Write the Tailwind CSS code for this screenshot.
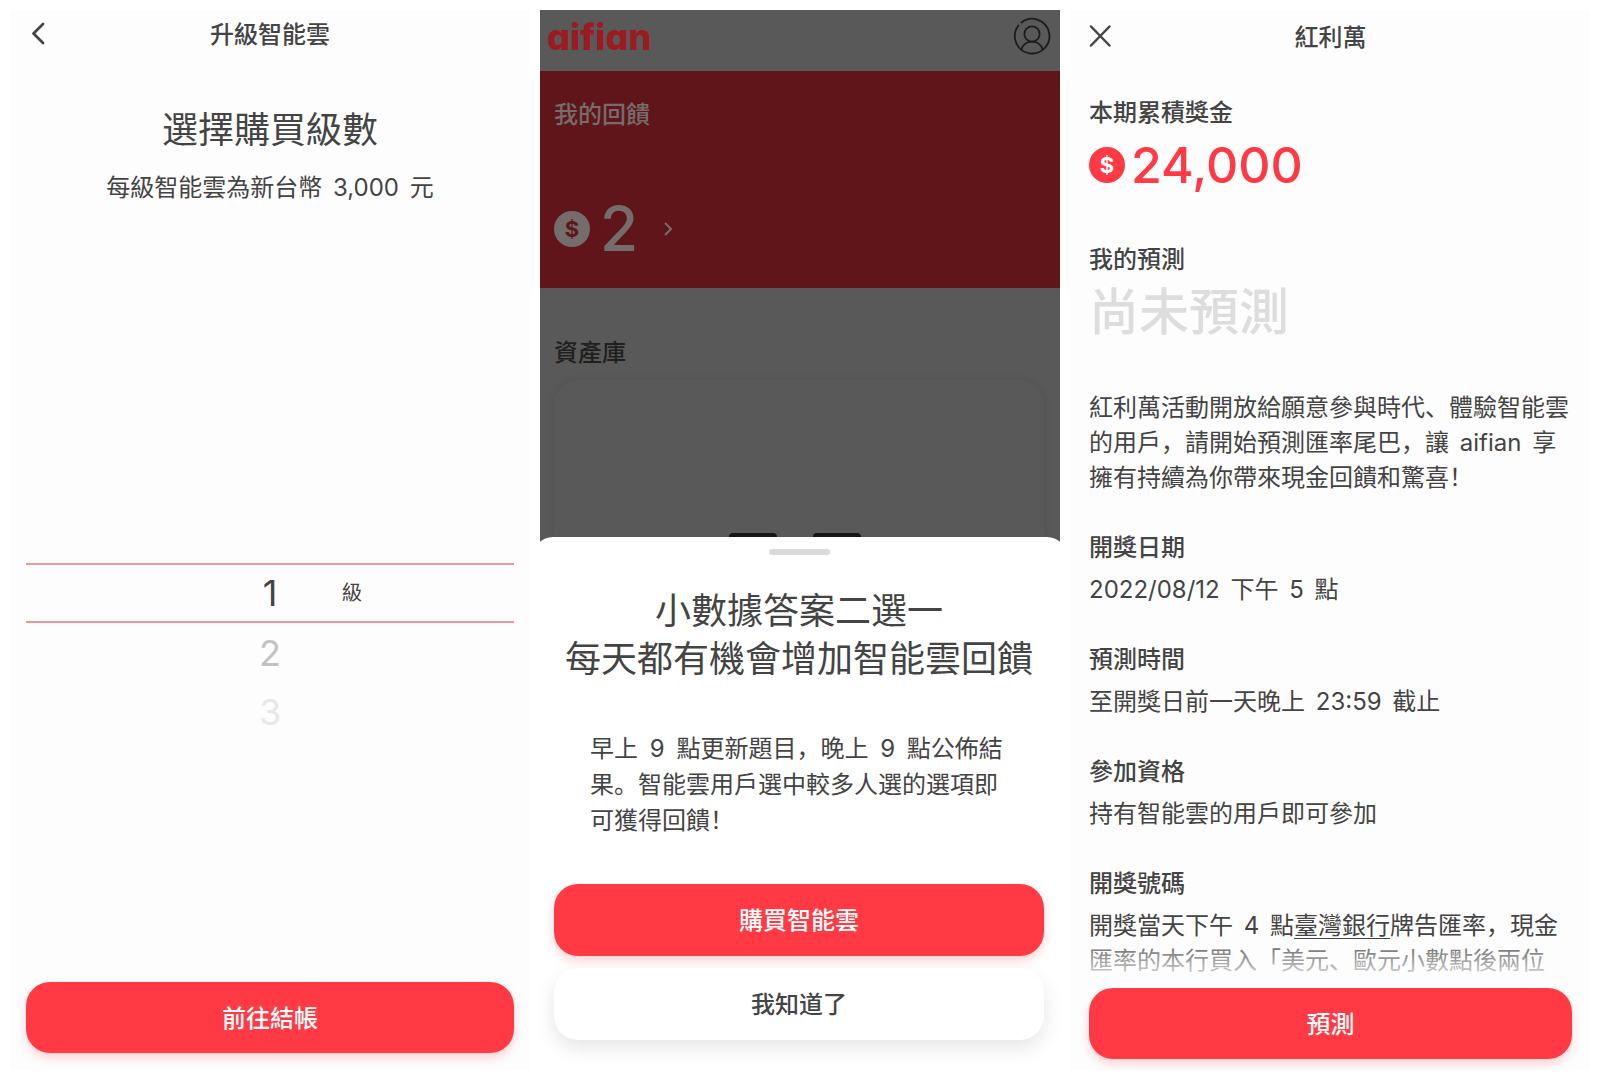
<!DOCTYPE html>
<html lang="zh">

<head>
    <meta charset="UTF-8">
    <meta name="viewport" content="width=device-width, initial-scale=1.0">
    <title>aifian 智能雲</title>
    <script src="https://cdn.jsdelivr.net/npm/@tailwindcss/browser@4"></script>
</head>

<body class="bg-white font-['Inter','Noto_Sans_CJK_SC',sans-serif] text-2xl text-[#444]">
    <div class="grid grid-cols-3 gap-2.5 p-2.5 h-screen">

        <!-- Upgrade: pick a level -->
        <section class="flex flex-col bg-[#fdfdfd] px-4 pb-[17px]">
            <header class="grid grid-cols-[40px_1fr_40px] items-center h-[50px]">
                <button type="button" aria-label="返回" class="pl-1 pb-1">
                    <svg class="w-6 h-6" viewBox="0 0 24 24" fill="none" stroke="#444" stroke-width="2.8" stroke-linecap="round" stroke-linejoin="round">
                        <path d="M13 3 3.500 12.500 13 22" />
                    </svg>
                </button>
                <h1 class="text-center font-medium">升級智能雲</h1>
            </header>

            <div class="mt-11 text-center">
                <h2 class="text-4xl leading-[52px]">選擇購買級數</h2>
                <p class="mt-3.5 leading-9">每級智能雲為新台幣 <span class="mx-1">3,000</span> 元</p>
            </div>

            <div class="flex-1 flex flex-col justify-center pb-1">
                <ul class="text-center text-4xl">
                    <li class="h-[60px]"></li>
                    <li class="h-[60px]"></li>
                    <li class="grid grid-cols-[1fr_144px_1fr] items-center h-[60px] border-y-2 border-[#e79a9d]">
                        <span class="col-start-2">1</span>
                        <span class="text-xl text-left">級</span>
                    </li>
                    <li class="h-[59px] leading-[60px] text-[#c2c2c2]">2</li>
                    <li class="h-[59px] leading-[60px] text-[#e8e8e8]">3</li>
                </ul>
            </div>

            <button type="button" class="h-[71px] pt-0.5 rounded-3xl bg-[#ff3a44] text-white font-medium shadow-[0_5px_10px_rgba(255,58,68,0.22)]">前往結帳</button>
        </section>

        <!-- Home dimmed behind the bottom sheet -->
        <section class="flex flex-col bg-[#595959] overflow-hidden">
            <header class="flex items-center justify-between h-[61px] pl-[7px] pr-2 pb-2">
                <span class="text-4xl font-extrabold text-[#9c1a22] [font-feature-settings:'cv11']">aifian</span>
                <button type="button" aria-label="個人資料">
                    <svg class="w-10 h-10" viewBox="0 0 40 40" fill="none" stroke="#1c1c1c" stroke-width="1.800" stroke-linecap="round">
                        <path d="M9.500 5.500A17.300 17.300 0 1 1 6.500 8.500" />
                        <circle cx="20" cy="17" r="7.600" />
                        <path d="M9.400 32.500C11 27.500 15 24.600 20 24.600S29 27.500 30.600 32.500" />
                    </svg>
                </button>
            </header>

            <div class="h-[217px] bg-[#5f1519] text-[#756c6c] px-3.5 pt-[26px]">
                <p class="leading-9 font-medium">我的回饋</p>
                <a href="#" class="flex items-center mt-[58px]">
                    <svg class="w-9 h-9" viewBox="0 0 36 36">
                        <circle cx="18" cy="18" r="18" fill="currentColor" />
                        <text x="18" y="26" text-anchor="middle" font-size="22" font-weight="700" fill="#5f1519">$</text>
                    </svg>
                    <span class="ml-2.5 text-[62px] leading-[76px] font-medium">2</span>
                    <svg class="w-3 h-4 ml-6" viewBox="0 0 12 16" fill="none" stroke="currentColor" stroke-width="2">
                        <path d="M3 2l6 6-6 6" />
                    </svg>
                </a>
            </div>

            <div class="h-[249px] pl-3.5 pr-4 pt-[47px] flex flex-col">
                <h2 class="leading-9 font-medium text-[#1f1f1f]">資產庫</h2>
                <div class="flex-1 flex items-end justify-center gap-9 mt-[9px] rounded-t-3xl bg-[#595959] shadow-[0_0_8px_rgba(0,0,0,0.08)]">
                    <span class="w-12 h-1 rounded-t-sm bg-[#151515]"></span>
                    <span class="w-12 h-1 rounded-t-sm bg-[#151515] mr-2"></span>
                </div>
            </div>

            <div class="flex-1 flex flex-col -mx-[7px] pl-[21px] pr-[23px] pb-[30px] bg-white rounded-t-[20px]">
                <div class="mx-auto mt-3 w-[61px] h-1.5 rounded-full bg-[#dcdcdc]"></div>
                <h2 class="mt-8 text-center text-4xl leading-[48px]">小數據答案二選一<br>每天都有機會增加智能雲回饋</h2>
                <p class="mt-12 pl-9 pr-8 leading-9">早上 <span class="mx-[5px]">9</span> 點更新題目，晚上 <span class="mx-[5px]">9</span> 點公佈結果。智能雲用戶選中較多人選的選項即可獲得回饋！</p>
                <button type="button" class="mt-auto h-[72px] pt-0.5 shrink-0 rounded-3xl bg-[#ff3a44] text-white font-medium shadow-[0_5px_10px_rgba(255,58,68,0.22)]">購買智能雲</button>
                <button type="button" class="mt-3 h-[72px] pt-0.5 shrink-0 rounded-3xl bg-white font-medium shadow-[0_8px_20px_rgba(0,0,0,0.1)]">我知道了</button>
            </div>
        </section>

        <!-- Bonus draw details -->
        <section class="relative flex flex-col bg-[#fdfdfd] pl-[19px] pr-[18px] pb-[11px] overflow-hidden">
            <header class="grid grid-cols-[40px_1fr_40px] items-center h-14 shrink-0">
                <button type="button" aria-label="關閉" class="pb-1">
                    <svg class="w-6 h-6" viewBox="0 0 24 24" fill="none" stroke="#444" stroke-width="2.500" stroke-linecap="round">
                        <path d="M2 2.500l18.500 19M20.500 2.500 2 21.500" />
                    </svg>
                </button>
                <h1 class="text-center font-medium">紅利萬</h1>
            </header>

            <div class="flex-1 min-h-0 overflow-hidden pt-[29px] leading-[35px]">
                <h2 class="font-medium leading-9">本期累積獎金</h2>
                <p class="flex items-center gap-1.5 text-[#ff3a44] text-[50px] leading-[68px] font-medium">
                    <svg class="w-9 h-9" viewBox="0 0 36 36">
                        <circle cx="18" cy="18" r="18" fill="currentColor" />
                        <text x="18" y="26" text-anchor="middle" font-size="22" font-weight="700" fill="#fff">$</text>
                    </svg>
                    24,000
                </p>
                <h2 class="mt-[43px] font-medium leading-9">我的預測</h2>
                <p class="text-[50px] leading-[68px] font-medium text-[#ddd]">尚未預測</p>

                <div class="mt-11 flex flex-col gap-[35px]">
                    <p>紅利萬活動開放給願意參與時代、體驗智能雲的用戶，請開始預測匯率尾巴，讓 <span class="mx-1">aifian</span> 享擁有持續為你帶來現金回饋和驚喜！</p>
                    <div>
                        <h3 class="mb-1.5 font-medium leading-9">開獎日期</h3>
                        <p>2022/08/12 <span class="ml-1">下午</span> <span class="mx-1">5</span> 點</p>
                    </div>
                    <div>
                        <h3 class="mb-1.5 font-medium leading-9">預測時間</h3>
                        <p>至開獎日前一天晚上 <span class="mx-1">23:59</span> 截止</p>
                    </div>
                    <div>
                        <h3 class="mb-1.5 font-medium leading-9">參加資格</h3>
                        <p>持有智能雲的用戶即可參加</p>
                    </div>
                    <div>
                        <h3 class="mb-1.5 font-medium leading-9">開獎號碼</h3>
                        <p>開獎當天下午 <span class="mx-1">4</span> 點<a href="#" class="underline underline-offset-4 decoration-1">臺灣銀行</a>牌告匯率，現金匯率的本行買入「美元、歐元小數點後兩位</p>
                    </div>
                </div>
            </div>

            <div class="relative">
                <div class="absolute bottom-full inset-x-0 h-11 bg-linear-to-b from-[#fdfdfd]/20 to-[#fdfdfd]"></div>
                <button type="button" class="block w-full h-[71px] pt-0.5 rounded-3xl bg-[#ff3a44] text-white font-medium shadow-[0_5px_10px_rgba(255,58,68,0.22)]">預測</button>
            </div>
        </section>

    </div>
</body>

</html>
